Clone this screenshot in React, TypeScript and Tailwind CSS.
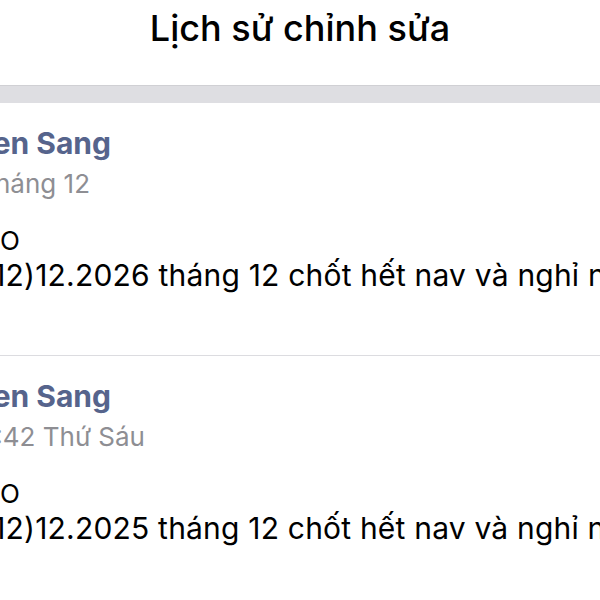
import React from "react";

const Entry = ({ date, dateEnd, content }: { date: string; dateEnd: string; content: string }) => (
  <div className="border-b border-[#dcdce0] h-[253px] pt-[18px]">
    <div className="flex justify-end w-[111px] whitespace-nowrap">
      <span className="text-[30px] leading-[44px] font-bold text-[#56648c]">Nguyen Sang</span>
    </div>
    <div className={`mt-[2px] flex justify-end whitespace-nowrap ${dateEnd}`}>
      <span className="text-[26px] leading-[34px] text-[#8e8e93]">{date}</span>
    </div>
    <div className="mt-[25px] flex flex-col whitespace-nowrap -ml-[18px] text-black">
      <span className="ml-[18px] text-[26px] leading-[30px]">O</span>
      <span className="text-[30px] leading-[38px] tracking-[0.2px]">{content}</span>
    </div>
  </div>
);

export default function App() {
  return (
    <div
      className="w-[600px] h-[600px] overflow-hidden bg-white"
      style={{ fontFamily: "Inter, 'Noto Sans', sans-serif" }}
    >
      <div className="h-[85px] flex justify-center pt-[6px]">
        <span className="text-[36px] leading-[44px] font-medium text-black">Lịch sử chỉnh sửa</span>
      </div>
      <div className="h-[18px] bg-[#dedee2] border-t border-[#d0d0d4]" />
      <Entry
        date="15:42 Thứ Sáu, tháng 12"
        dateEnd="w-[90px]"
        content="(12)12.2026 tháng 12 chốt hết nav và nghỉ noel"
      />
      <Entry
        date="15:42 Thứ Sáu"
        dateEnd="w-[145px]"
        content="(12)12.2025 tháng 12 chốt hết nav và nghỉ noel"
      />
    </div>
  );
}
